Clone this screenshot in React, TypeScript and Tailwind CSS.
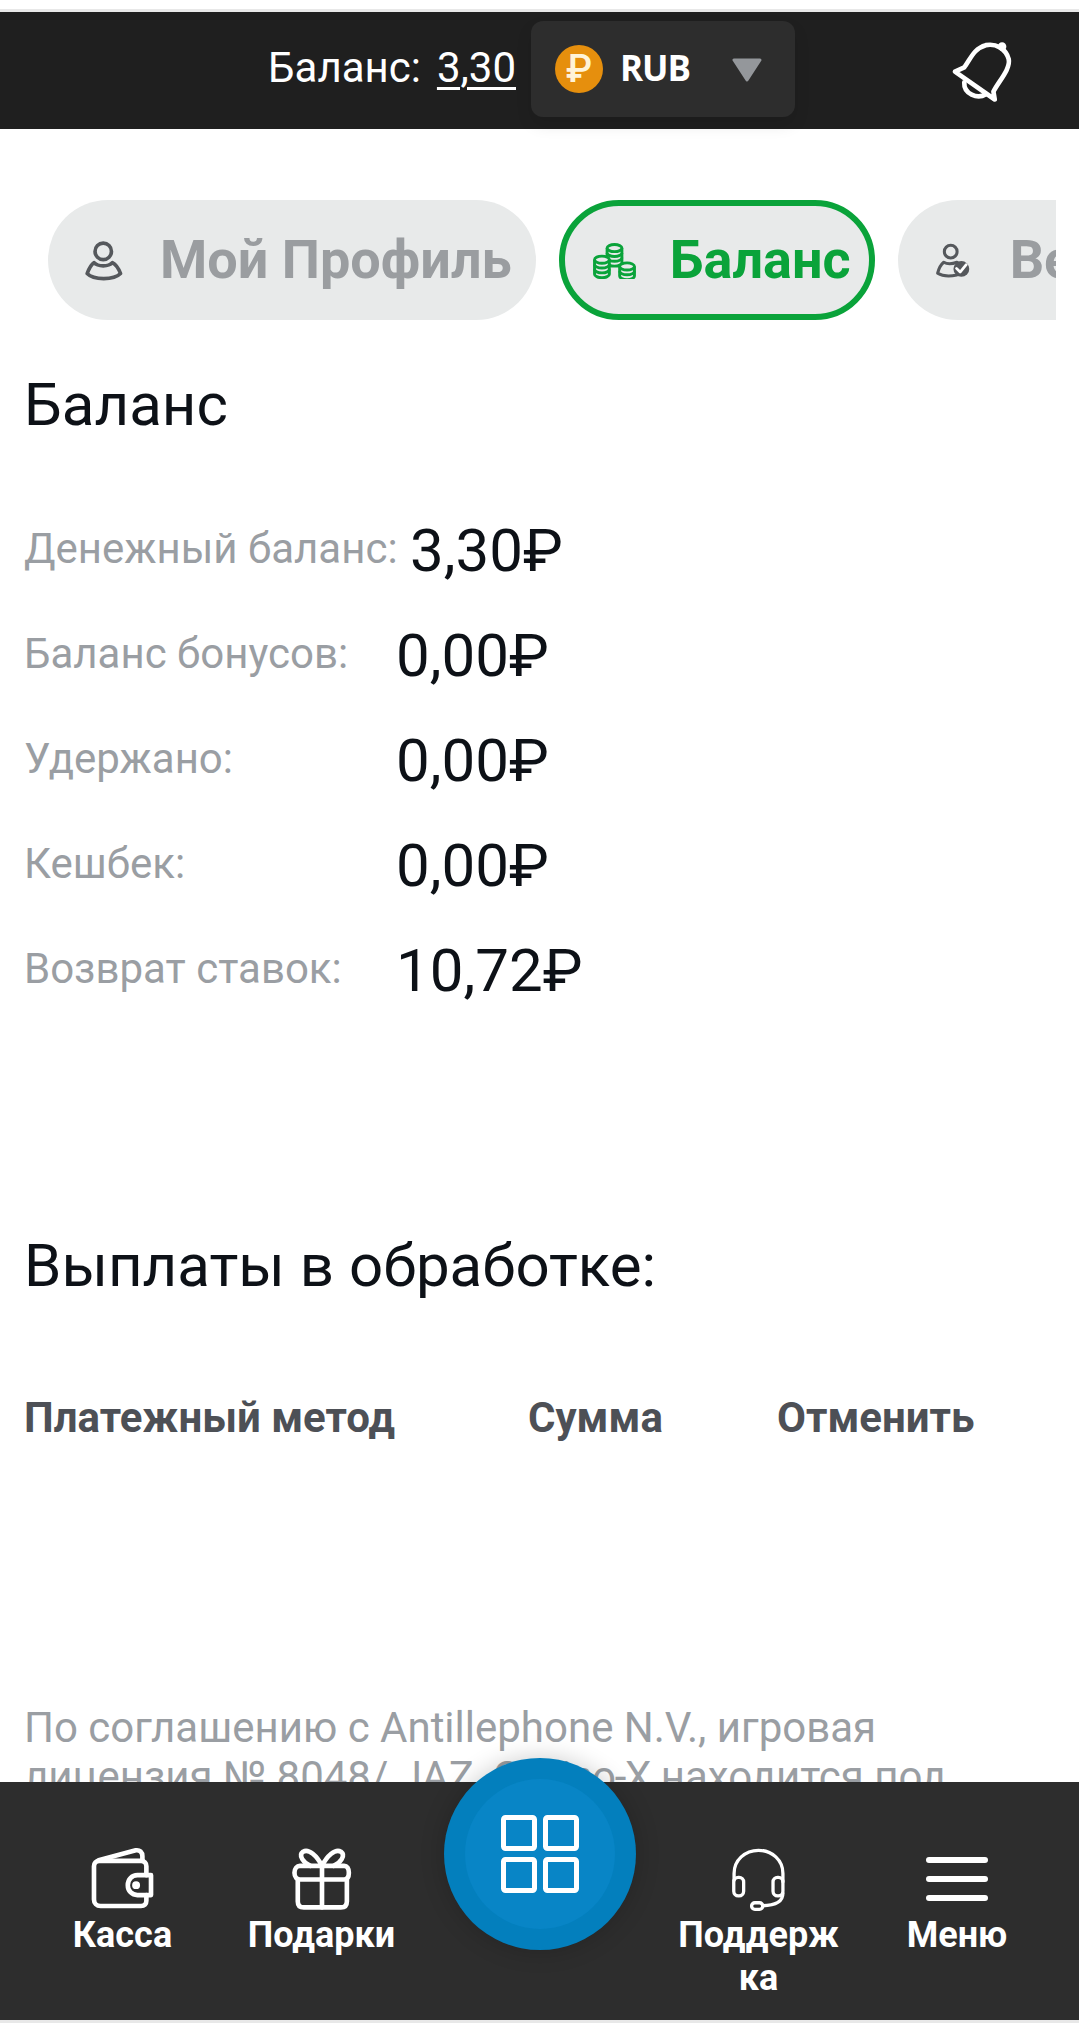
import React from 'react';

type Row = { label: string; value: string; labelClass: string };

const rows: Row[] = [
  { label: 'Денежный баланс:', value: '3,30₽', labelClass: 'w-[386px]' },
  { label: 'Баланс бонусов:', value: '0,00₽', labelClass: 'w-[372px]' },
  { label: 'Удержано:', value: '0,00₽', labelClass: 'w-[372px]' },
  { label: 'Кешбек:', value: '0,00₽', labelClass: 'w-[372px]' },
  { label: 'Возврат ставок:', value: '10,72₽', labelClass: 'w-[372px]' },
];

function BellIcon() {
  return (
    <svg viewBox="60 50 190 195" className="h-[65px] w-[63px]" fill="none" stroke="#fff" strokeWidth="14" strokeLinecap="round" strokeLinejoin="round">
      <path d="M72 148 L100 135 C118 112 128 78 165 68 C195 62 225 78 234 110 C240 140 205 175 188 208 L192 232 Z" />
      <path d="M100 180 C98 215 140 232 165 216" />
      <circle cx="214" cy="72" r="6" fill="#fff" />
    </svg>
  );
}

function ProfileIcon() {
  return (
    <svg viewBox="70 60 125 130" className="h-[41px] w-[38px]" fill="none" stroke="#55585c" strokeWidth="12" strokeLinejoin="round">
      <circle cx="130" cy="95" r="27" />
      <path d="M100 132 C112 146 148 146 160 132 C172 138 182 155 187 168 C165 190 98 190 77 168 C82 155 90 138 100 132 Z" />
    </svg>
  );
}

function CoinStack({ cx, top, layers }: { cx: number; top: number; layers: number }) {
  const rx = 23;
  const ry = 11;
  const step = 15;
  const bottom = top + step * layers;
  return (
    <g>
      <path d={`M${cx - rx} ${top} V${bottom} A${rx} ${ry} 0 0 0 ${cx + rx} ${bottom} V${top}`} fill="#e8eaea" />
      <ellipse cx={cx} cy={top} rx={rx} ry={ry} fill="#e8eaea" />
      {Array.from({ length: layers - 1 }).map((_, i) => (
        <path key={i} d={`M${cx - rx} ${top + step * (i + 1)} A${rx} ${ry} 0 0 0 ${cx + rx} ${top + step * (i + 1)}`} />
      ))}
    </g>
  );
}

function CoinsIcon() {
  return (
    <svg viewBox="62 66 146 118" className="h-[38px] w-[47px]" fill="none" stroke="#0aa33a" strokeWidth="9">
      <CoinStack cx={135} top={88} layers={3} />
      <CoinStack cx={96} top={124} layers={3} />
      <CoinStack cx={174} top={145} layers={2} />
    </svg>
  );
}

function UserCheckIcon() {
  return (
    <svg viewBox="100 120 125 125" className="h-[38px] w-[38px]" fill="none" stroke="#55585c" strokeWidth="10" strokeLinejoin="round">
      <circle cx="155" cy="155" r="21" />
      <path d="M132 190 C142 196 160 196 176 190 L190 205 L175 232 C155 236 128 236 112 226 C116 210 122 198 132 190 Z" />
      <circle cx="190" cy="212" r="26" fill="#55585c" stroke="none" />
      <path d="M174 210 L186 222 L206 198" stroke="#fff" strokeWidth="9" strokeLinecap="round" />
    </svg>
  );
}

function WalletIcon() {
  return (
    <svg viewBox="62 50 196 190" className="h-[63px] w-[65px]" fill="none" stroke="#fff" strokeWidth="14" strokeLinejoin="round" strokeLinecap="round">
      <path d="M232 135 V108 C232 98 226 92 216 92 H90 C80 92 74 98 74 108 V208 C74 220 82 228 94 228 H216 C226 228 232 222 232 212 V195" />
      <path d="M88 90 L200 60 C212 58 220 66 220 78 V92" />
      <path d="M205 135 H246 V195 H205 C188 195 176 182 176 165 C176 148 188 135 205 135 Z" />
      <circle cx="201" cy="165" r="5" fill="#fff" />
    </svg>
  );
}

function GiftIcon() {
  return (
    <svg viewBox="662 45 186 196" className="h-[65px] w-[62px]" fill="none" stroke="#fff" strokeWidth="14" strokeLinejoin="round" strokeLinecap="round">
      <path d="M688 105 H822 C830 105 836 112 836 126 C836 140 830 146 822 146 H688 C680 146 672 140 672 126 C672 112 680 105 688 105 Z" />
      <path d="M682 146 V212 C682 224 688 230 700 230 H812 C824 230 830 224 830 212 V146" />
      <path d="M755 105 V230" />
      <path d="M755 105 C740 75 715 52 698 62 C682 74 700 96 720 105" />
      <path d="M755 105 C770 75 795 52 812 62 C828 74 810 96 790 105" />
    </svg>
  );
}

function HeadsetIcon() {
  return (
    <svg viewBox="90 42 172 200" className="h-[66px] w-[57px]" fill="none" stroke="#fff" strokeWidth="10" strokeLinejoin="round" strokeLinecap="round">
      <path d="M102 145 V125 C102 85 135 55 176 55 C217 55 250 85 250 125 V150" />
      <rect x="101" y="137" width="30" height="56" rx="14" />
      <rect x="220" y="137" width="30" height="56" rx="14" />
      <path d="M250 185 C250 210 225 222 188 223" />
      <rect x="155" y="214" width="34" height="20" rx="10" />
    </svg>
  );
}

function MenuIcon() {
  return (
    <div className="flex h-[65px] w-[62px] flex-col justify-center gap-[13px]">
      <div className="h-[6px] rounded-full bg-white" />
      <div className="h-[6px] rounded-full bg-white" />
      <div className="h-[6px] rounded-full bg-white" />
    </div>
  );
}

function GridIcon() {
  return (
    <svg viewBox="0 0 78 78" className="h-[78px] w-[78px]" fill="none" stroke="#fff" strokeWidth="5" strokeLinejoin="round">
      <rect x="2.5" y="2.5" width="31" height="31" rx="2" />
      <rect x="44.5" y="2.5" width="31" height="31" rx="2" />
      <rect x="2.5" y="44.5" width="31" height="31" rx="2" />
      <rect x="44.5" y="44.5" width="31" height="31" rx="2" />
    </svg>
  );
}

function NavItem({ icon, label }: { icon: React.ReactNode; label: string }) {
  return (
    <button className="flex flex-col items-center px-[14px] pt-[64px]">
      <div className="flex h-[65px] items-center justify-center">{icon}</div>
      <span className="mt-[3px] w-full text-center text-[36px] font-bold leading-[43px] text-white [overflow-wrap:anywhere]">
        {label}
      </span>
    </button>
  );
}

export default function App() {
  return (
    <div className="relative h-[2030px] w-[1079px] overflow-hidden bg-white font-['Roboto',sans-serif]">
      <div className="h-[12px] border-b-[3px] border-[#e8e8e8]" />

      <header className="flex h-[117px] items-start justify-end bg-[#1f1f1f] pr-[65px]">
        <div className="mt-[32px] flex items-center text-[42px] leading-[48px] text-white">
          <span>Баланс:</span>
          <span className="ml-[16px] underline decoration-[3px] underline-offset-[5px]">3,30</span>
        </div>
        <div className="mt-[9px] ml-[15px] flex h-[96px] w-[264px] items-start rounded-[12px] bg-[#2d2d2d] pl-[24px] pt-[24px] shadow-[0_8px_16px_rgba(0,0,0,0.1)]">
          <div className="flex h-[48px] w-[48px] items-center justify-center rounded-full bg-[#e68f0d] text-[38px] font-medium leading-none text-[#fff3d8]">
            ₽
          </div>
          <span className="ml-[17px] font-['Open_Sans',sans-serif] text-[35px] font-bold leading-[46px] tracking-[-1px] text-white">RUB</span>
          <svg viewBox="0 0 30 24" className="ml-[42px] mt-[13px] h-[24px] w-[30px]" fill="#94979b" stroke="#94979b" strokeWidth="3" strokeLinejoin="round">
            <path d="M2 2 H28 L15 22 Z" />
          </svg>
        </div>
        <div className="ml-[156px] mt-[27px]">
          <BellIcon />
        </div>
      </header>

      <div className="ml-[48px] mr-[23px] mt-[71px] flex gap-[23px] overflow-hidden whitespace-nowrap text-[54px] font-bold leading-[62px]">
        <button className="flex h-[120px] shrink-0 items-center rounded-full bg-[#e8eaea] pl-[37px] pr-[24px] text-[#9a9da0]">
          <ProfileIcon />
          <span className="ml-[37px]">Мой Профиль</span>
        </button>
        <button className="flex h-[120px] shrink-0 items-center rounded-full border-[6px] border-[#0aa33a] bg-[#e8eaea] pl-[26px] pr-[18px] text-[#0aa33a]">
          <CoinsIcon />
          <span className="ml-[32px]">Баланс</span>
        </button>
        <button className="flex h-[120px] shrink-0 items-center rounded-full bg-[#e8eaea] pl-[36px] pr-[24px] text-[#9a9da0]">
          <UserCheckIcon />
          <span className="ml-[38px]">Верификация</span>
        </button>
      </div>

      <main className="px-[24px]">
        <h2 className="mt-[52px] text-[60px] font-normal leading-[66px] text-[#0d1117]">Баланс</h2>

        <div className="mt-[81px] flex flex-col gap-[39px]">
          {rows.map((row) => (
            <div key={row.label} className="flex h-[66px] items-start">
              <span className={`${row.labelClass} shrink-0 pt-[6px] text-[42px] leading-[47px] text-[#9a9ea3]`}>{row.label}</span>
              <span className="text-[60px] leading-[64px] text-[#0d1117]">{row.value}</span>
            </div>
          ))}
        </div>

        <h2 className="mt-[228px] text-[60px] font-normal leading-[66px] text-[#0d1117]">Выплаты в обработке:</h2>

        <div className="mt-[95px] flex text-[42px] font-bold leading-[47px] text-[#4d5056]">
          <span className="w-[504px]">Платежный метод</span>
          <span className="w-[249px]">Сумма</span>
          <span>Отменить</span>
        </div>

        <p className="mt-[262px] max-w-[1000px] text-[42px] leading-[49px] text-[#9a9ea3]">
          По соглашению с Antillephone N.V., игровая лицензия № 8048/ JAZ, <span className="tracking-[-1.2px]">Casino-X</span> находится под
        </p>
      </main>

      <div className="absolute inset-x-0 bottom-0 h-[248px] bg-white">
        <nav className="grid h-[238px] grid-cols-[199px_199px_238px_199px_198px] bg-[#2d2d2d] px-[23px]">
          <NavItem icon={<WalletIcon />} label="Касса" />
          <NavItem icon={<GiftIcon />} label="Подарки" />
          <div className="-mt-[24px] flex justify-center">
            <button className="flex h-[192px] w-[192px] items-center justify-center rounded-full bg-[#037fbd] shadow-[0_0_24px_rgba(0,0,0,0.2)]">
              <span className="flex h-[150px] w-[150px] items-center justify-center rounded-full bg-[#0885c6]">
                <GridIcon />
              </span>
            </button>
          </div>
          <NavItem icon={<HeadsetIcon />} label="Поддержка" />
          <NavItem icon={<MenuIcon />} label="Меню" />
        </nav>
        <div className="h-[3px] bg-[#e8e8e8]" />
      </div>
    </div>
  );
}
